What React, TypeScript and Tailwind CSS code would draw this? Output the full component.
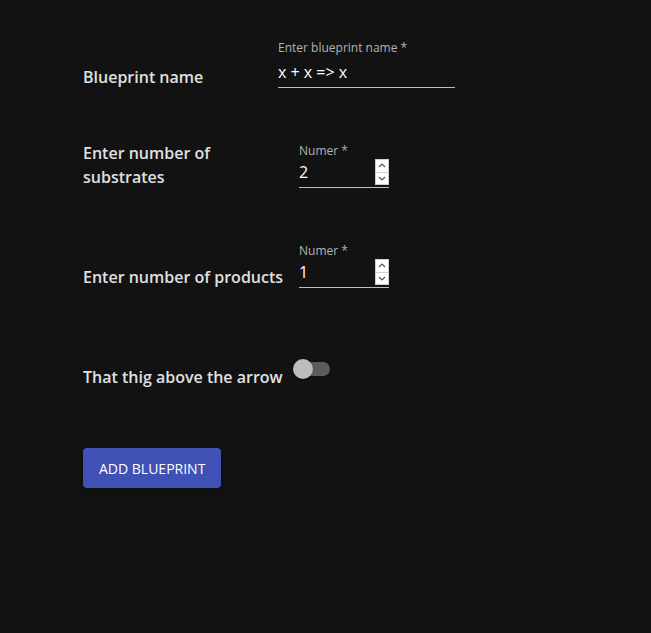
import React from "react";

const font = { fontFamily: '"Open Sans", "Liberation Sans", sans-serif' };

function Spinner() {
  return (
    <div className="flex h-[26px] w-[14px] flex-col border border-[#cfcfcf] bg-white">
      <div className="flex flex-1 items-center justify-center border-b border-[#cfcfcf]">
        <svg width="8" height="5" viewBox="0 0 8 5">
          <path d="M1 4 L4 1 L7 4" fill="none" stroke="#555" strokeWidth="1.2" />
        </svg>
      </div>
      <div className="flex flex-1 items-center justify-center">
        <svg width="8" height="5" viewBox="0 0 8 5">
          <path d="M1 1 L4 4 L7 1" fill="none" stroke="#555" strokeWidth="1.2" />
        </svg>
      </div>
    </div>
  );
}

function Field({ label, value, width, number }: { label: string; value: string; width: string; number?: boolean }) {
  return (
    <div className={`flex h-[48px] flex-col ${width}`}>
      <div className={`h-[16px] text-[12px] leading-[14px] text-[#b3b3b3] ${number ? "pt-[4px]" : "pt-[1px]"}`}>
        {label} *
      </div>
      <div className="flex h-[32px] items-center border-b border-[#bdbdbd] pt-[1px]">
        <span className="flex-1 text-[16px] leading-[23px] text-white">{value}</span>
        {number && <Spinner />}
      </div>
    </div>
  );
}

export default function App() {
  return (
    <div className="min-h-[633px] w-full bg-[#121212]" style={font}>
      <div className="flex flex-col gap-[52px] pl-[83px] pt-[40px]">
        <div className="flex h-[48px] items-end">
          <div className="w-[195px] translate-y-px text-[16px] font-semibold leading-6 text-[#e0e0e0]">Blueprint name</div>
          <Field label="Enter blueprint name" value="x + x => x" width="w-[177px]" />
        </div>

        <div className="flex h-[48px] items-end gap-4">
          <div className="w-[200px] translate-y-px text-[16px] font-semibold leading-6 text-[#e0e0e0]">
            Enter number of
            <br />
            substrates
          </div>
          <Field label="Numer" value="2" width="w-[90px]" number />
        </div>

        <div className="flex h-[48px] items-end gap-4">
          <div className="w-[200px] translate-y-px whitespace-nowrap text-[16px] font-semibold leading-6 text-[#e0e0e0]">
            Enter number of products
          </div>
          <Field label="Numer" value="1" width="w-[90px]" number />
        </div>

        <div className="flex h-[48px] items-end">
          <div className="w-[201px] translate-y-px whitespace-nowrap text-[16px] font-semibold leading-6 text-[#e0e0e0]">
            That thig above the arrow
          </div>
          <div className="relative h-[38px] w-[58px]">
            <div className="absolute left-[12px] top-[12px] h-[14px] w-[34px] rounded-full bg-[#5c5c5c]" />
            <div className="absolute left-[9px] top-[9px] h-[20px] w-[20px] rounded-full bg-[#bdbdbd] shadow-[0_2px_1px_-1px_rgba(0,0,0,0.2),0_1px_1px_0_rgba(0,0,0,0.14),0_1px_3px_0_rgba(0,0,0,0.12)]" />
          </div>
        </div>

        <div className="mt-2">
          <button className="h-[40px] rounded-[4px] bg-[#3f51b5] px-4 text-[14px] font-medium uppercase text-white shadow-md">
            Add Blueprint
          </button>
        </div>
      </div>
    </div>
  );
}
